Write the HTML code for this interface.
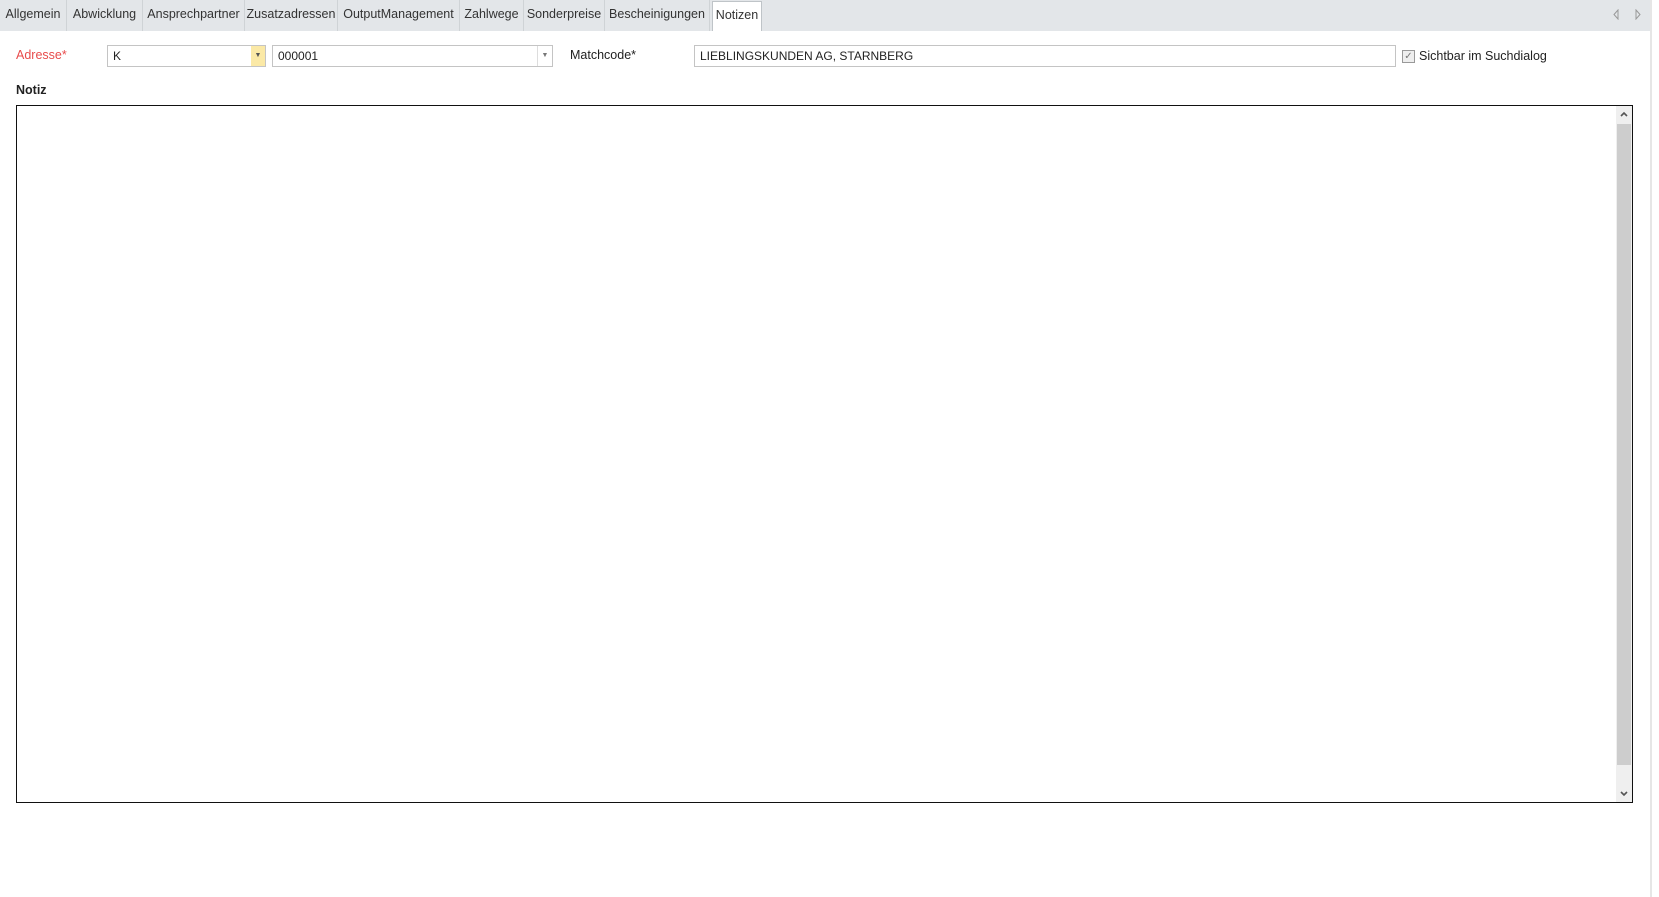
<!DOCTYPE html>
<html><head><style>
*{box-sizing:border-box;margin:0;padding:0}
body{width:1659px;height:897px;background:#fff;font-family:"Liberation Sans",sans-serif;font-size:12px;color:#222;position:relative;overflow:hidden}
.bar{position:absolute;left:0;top:0;width:1650px;height:31px;background:#e3e6e9}
.tab{position:absolute;top:0;height:31px;line-height:28px;text-align:center;border-right:1px solid #cfd3d6;color:#333;font-size:12.5px}
.sel{background:#fff;border:1px solid #bfc4c8;border-bottom:none;top:1px;height:30px;line-height:26px}
.a{position:absolute;font-size:12.5px}
.in{position:absolute;border:1px solid #c4c4c4;background:#fff;height:22px;padding-left:5px;line-height:20px}
.right{position:absolute;left:1650px;top:0;width:2px;height:897px;background:#e6e6e6}
</style></head><body>
<div class="bar">
<div class="tab" style="left:0;width:67px">Allgemein</div>
<div class="tab" style="left:67px;width:76px">Abwicklung</div>
<div class="tab" style="left:143px;width:102px">Ansprechpartner</div>
<div class="tab" style="left:245px;width:93px">Zusatzadressen</div>
<div class="tab" style="left:338px;width:122px">OutputManagement</div>
<div class="tab" style="left:460px;width:64px">Zahlwege</div>
<div class="tab" style="left:524px;width:81px">Sonderpreise</div>
<div class="tab" style="left:605px;width:105px">Bescheinigungen</div>
<div class="tab sel" style="left:712px;width:50px">Notizen</div>
<svg style="position:absolute;left:1612px;top:9px" width="30" height="11"><path d="M6 1L2 5.5L6 10Z M24 1L28 5.5L24 10Z" fill="none" stroke="#999"/></svg>
</div>
<div class="right"></div>
<div class="a" style="left:16px;top:48px;color:#e84c4c">Adresse*</div>
<div class="in" style="left:107px;top:45px;width:159px">K<div style="position:absolute;right:0;top:0;width:14px;height:20px;background:#fbe9a6;font-size:7px;text-align:center;line-height:20px;color:#555">▼</div></div>
<div class="in" style="left:272px;top:45px;width:281px">000001<div style="position:absolute;right:0;top:0;width:15px;height:20px;border-left:1px solid #ddd;font-size:7px;text-align:center;line-height:20px;color:#777">▼</div></div>
<div class="a" style="left:570px;top:48px">Matchcode*</div>
<div class="in" style="left:694px;top:45px;width:702px">LIEBLINGSKUNDEN AG, STARNBERG</div>
<div class="a" style="left:1402px;top:50px;width:13px;height:13px;border:1px solid #999;background:#eee;font-size:10px;line-height:11px;text-align:center;color:#777">✓</div>
<div class="a" style="left:1419px;top:49px">Sichtbar im Suchdialog</div>
<div class="a" style="left:16px;top:83px;font-weight:bold">Notiz</div>
<div style="position:absolute;left:16px;top:105px;width:1617px;height:698px;border:1px solid #111">
<div style="position:absolute;right:0;top:0;width:16px;height:100%;background:#efefef">
<svg style="position:absolute;top:5px;left:4px" width="8" height="6"><path d="M1 5L4 2L7 5" fill="none" stroke="#555" stroke-width="1.6"/></svg>
<div style="position:absolute;top:18px;left:1px;width:14px;height:641px;background:#cdcdcd"></div>
<svg style="position:absolute;bottom:5px;left:4px" width="8" height="6"><path d="M1 1L4 4L7 1" fill="none" stroke="#555" stroke-width="1.6"/></svg>
</div></div>
</body></html>
